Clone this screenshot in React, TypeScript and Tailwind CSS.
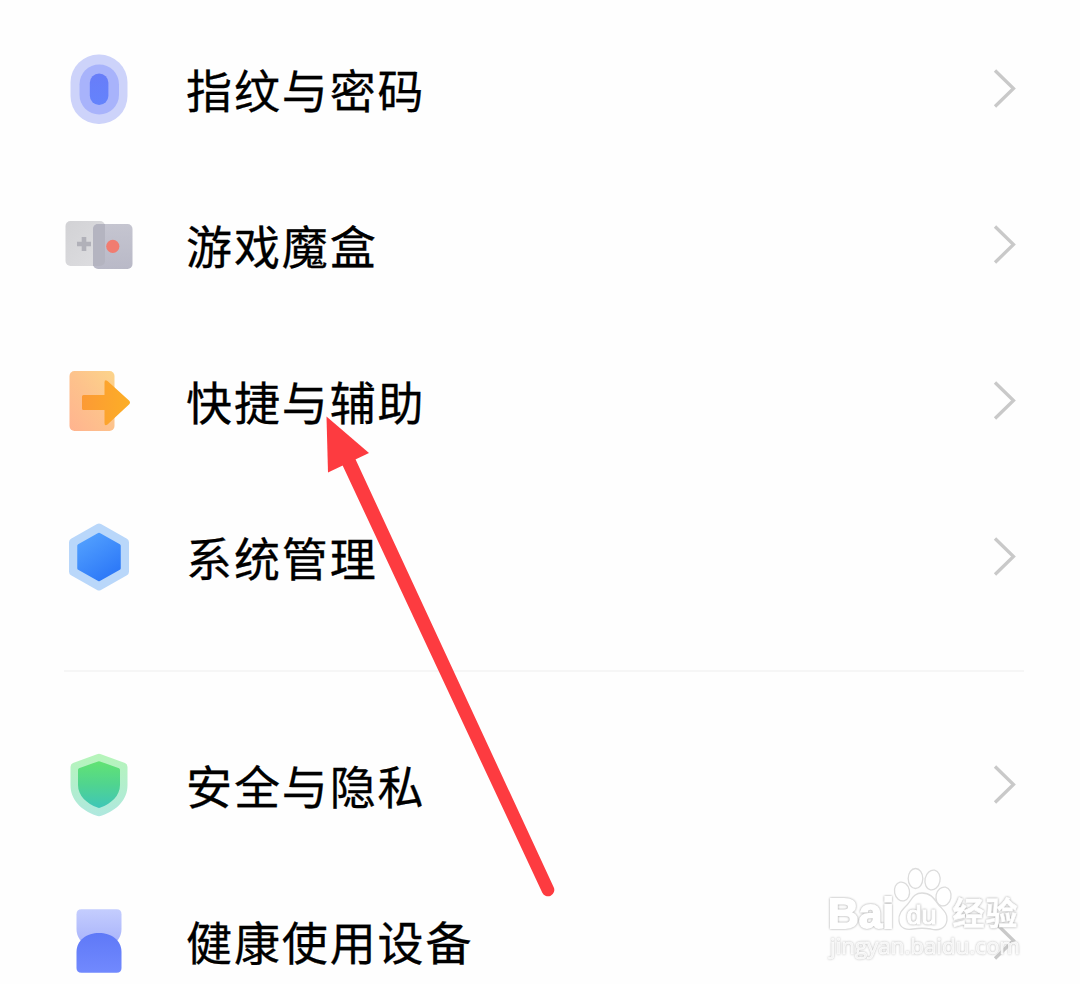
import { ReactNode } from "react";

interface ICON {
  children: ReactNode;
}
const Icon: React.FC<ICON> = ({ children }) => {
  return (
    <svg width="72" height="72" viewBox="0 0 72 72" className="shrink-0">
      {children}
    </svg>
  );
};

const FingerprintIcon = () => (
  <Icon>
    <defs>
      <linearGradient id="finger" x1="0" y1="0" x2="0" y2="1">
        <stop offset="0" stopColor="#687df8" />
        <stop offset="1" stopColor="#6483fc" />
      </linearGradient>
    </defs>
    <rect x="7.5" y="1.5" width="57" height="69.5" rx="28" fill="#cdd3fa" />
    <rect x="16.5" y="11.5" width="39.5" height="50" rx="19.7" fill="#a8b3fb" />
    <rect x="26.8" y="20.5" width="18.6" height="31.5" rx="9.3" fill="url(#finger)" />
  </Icon>
);

const GameIcon = () => (
  <Icon>
    <defs>
      <linearGradient id="padLeft" x1="0" y1="0" x2="1" y2="1">
        <stop offset="0" stopColor="#d2d2d5" />
        <stop offset="1" stopColor="#dedee1" />
      </linearGradient>
      <linearGradient id="padRight" x1="0" y1="0" x2="0" y2="1">
        <stop offset="0" stopColor="#c5c5d0" />
        <stop offset="1" stopColor="#b9b9c7" />
      </linearGradient>
    </defs>
    <rect x="2.5" y="12" width="39.5" height="45" rx="5" fill="url(#padLeft)" />
    <rect x="30" y="15" width="39.5" height="45" rx="5" fill="url(#padRight)" />
    <path d="M30 20a5 5 0 0 1 5-5h7v37a5 5 0 0 1-5 5h-7z" fill="#b4b4c0" />
    <path d="M21 28v14M14 35h14" stroke="#b1b1b9" strokeWidth="4.6" />
    <circle cx="49.8" cy="37.3" r="6.6" fill="#f17c70" />
  </Icon>
);

const ShortcutIcon = () => (
  <Icon>
    <defs>
      <linearGradient id="door" x1="0" y1="1" x2="1" y2="0">
        <stop offset="0" stopColor="#ffb38f" />
        <stop offset="0.5" stopColor="#fdc28c" />
        <stop offset="1" stopColor="#fcd48a" />
      </linearGradient>
      <linearGradient id="arrow" x1="0" y1="0" x2="1" y2="0">
        <stop offset="0" stopColor="#fc9a35" />
        <stop offset="1" stopColor="#fcae26" />
      </linearGradient>
    </defs>
    <rect x="6.5" y="6" width="45" height="60" rx="5" fill="url(#door)" />
    <path
      d="M19 31.500q0-1.500 1.500-1.500H41.500V17.500q0-3.500 3-1.500L66 35.500q2 2 0 4L44.500 59.500q-3 2-3-1.500V45H20.500q-1.500 0-1.500-1.500z"
      fill="url(#arrow)"
    />
  </Icon>
);

const SystemIcon = () => (
  <Icon>
    <defs>
      <linearGradient id="hex" x1="0" y1="0" x2="0.6" y2="1">
        <stop offset="0" stopColor="#55a3ff" />
        <stop offset="1" stopColor="#2e7af8" />
      </linearGradient>
    </defs>
    <path
      d="M36 6.500L62 21.300V50.700L36 65.500L10 50.700V21.300z"
      fill="#b9d7fa"
      stroke="#b9d7fa"
      strokeWidth="8"
      strokeLinejoin="round"
    />
    <path
      d="M36 13.500L56 24.700V47.300L36 58.500L16 47.300V24.700z"
      fill="url(#hex)"
      stroke="url(#hex)"
      strokeWidth="3.500"
      strokeLinejoin="round"
    />
  </Icon>
);

const ShieldIcon = () => (
  <Icon>
    <defs>
      <linearGradient id="shieldOuter" x1="0" y1="0" x2="0" y2="1">
        <stop offset="0" stopColor="#b6f5b9" />
        <stop offset="1" stopColor="#afe8df" />
      </linearGradient>
      <linearGradient id="shieldInner" x1="0" y1="0" x2="0" y2="1">
        <stop offset="0" stopColor="#62e373" />
        <stop offset="0.5" stopColor="#50d48f" />
        <stop offset="1" stopColor="#3fc6b8" />
      </linearGradient>
    </defs>
    <path
      d="M34 5.200Q36 4.300 38 5.200L62 14Q64.500 15 64.500 18V36C64.500 51 54 61 39 66.500Q36 67.800 33 66.500C18 61 7.500 51 7.500 36V18Q7.500 15 10 14z"
      fill="url(#shieldOuter)"
    />
    <path
      d="M35 12.400Q36 12 37 12.400L56 19.300Q57 19.700 57 21V36C57 47 48 54.500 37.500 58.600Q36 59.200 34.500 58.600C24 54.500 15 47 15 36V21Q15 19.700 16 19.300z"
      fill="url(#shieldInner)"
    />
  </Icon>
);

const DeviceIcon = () => (
  <Icon>
    <defs>
      <linearGradient id="deviceTop" x1="0" y1="0" x2="0" y2="1">
        <stop offset="0" stopColor="#c4cdfe" />
        <stop offset="1" stopColor="#a5b0fa" />
      </linearGradient>
      <linearGradient id="deviceBottom" x1="0" y1="0" x2="0" y2="1">
        <stop offset="0" stopColor="#5f79f7" />
        <stop offset="1" stopColor="#7189fe" />
      </linearGradient>
    </defs>
    <path
      d="M18.500 4.200H53.500Q58.500 4.200 58.500 9.200V24C58.500 36 48 43.500 36 43.500S13.500 36 13.500 24V9.200Q13.500 4.200 18.500 4.200z"
      fill="url(#deviceTop)"
    />
    <path
      d="M13.500 47C13.500 35 24 28 36 28S58.500 35 58.500 47V63Q58.500 67.700 53.500 67.700H18.500Q13.500 67.700 13.500 63z"
      fill="url(#deviceBottom)"
    />
  </Icon>
);

interface ROW {
  title: string;
  icon: ReactNode;
}
const Row: React.FC<ROW> = ({ title, icon }) => {
  return (
    <li className="flex h-[156px] items-center px-[63px]">
      {icon}
      <span className="ml-[51px] flex-1 pb-0.5 text-[46px] leading-none tracking-[1.9px] whitespace-nowrap text-black [-webkit-text-stroke:0.3px_black]">
        {title}
      </span>
      <svg width="24" height="42" viewBox="0 0 24 42" className="shrink-0">
        <path d="M2 2.500L20.500 20.500L2 38.500" fill="none" stroke="#c9c9c9" strokeWidth="3.300" />
      </svg>
    </li>
  );
};

const Watermark = () => (
  <svg
    width="230"
    height="125"
    viewBox="0 0 230 125"
    className="absolute top-[855px] left-[810px]"
    fill="#fff"
    stroke="#fff"
  >
    <g stroke="#dcdcdc" strokeWidth="1.300">
      <ellipse cx="92" cy="36.500" rx="7.500" ry="9.500" transform="rotate(-12 92 36.500)" />
      <ellipse cx="105.500" cy="23.500" rx="7.300" ry="10" />
      <ellipse cx="122.500" cy="25" rx="7.500" ry="10" transform="rotate(12 122.500 25)" />
      <ellipse cx="133.500" cy="41.500" rx="7.500" ry="9.500" transform="rotate(12 133.500 41.500)" />
      <path d="M112 38C104 38 102 44 97 50C92 55 88 59 89 66C90 74 97 75 103 74C109 73 115 73 121 74C128 76 136 74 137 65C138 58 132 54 128 49C123 42 120 38 112 38z" />
    </g>
    <g className="[filter:drop-shadow(0_0_0.8px_#a0a0a0)]">
      <text
        x="18"
        y="72.500"
        fontFamily="Liberation Sans, sans-serif"
        fontWeight="bold"
        fontSize="42"
        textLength="66"
        lengthAdjust="spacingAndGlyphs"
        strokeWidth="1.800"
      >
        Bai
      </text>
      <text
        x="96.500"
        y="69"
        fontFamily="Liberation Sans, sans-serif"
        fontSize="26"
        textLength="30"
        lengthAdjust="spacingAndGlyphs"
        strokeWidth="1.200"
      >
        du
      </text>
      <text
        x="142.500"
        y="70"
        fontFamily="Noto Sans CJK SC, sans-serif"
        fontSize="32"
        fontWeight="bold"
        textLength="65"
        strokeWidth="0.600"
      >
        经验
      </text>
    </g>
    <text
      x="20"
      y="98.500"
      fontFamily="Open Sans, Noto Sans, sans-serif"
      fontSize="22"
      textLength="190"
      lengthAdjust="spacingAndGlyphs"
      strokeWidth="0.600"
      fillOpacity="0.75"
      className="[filter:drop-shadow(0_0_0.8px_#b0b0b0)]"
    >
      jingyan.baidu.com
    </text>
  </svg>
);

const App = () => {
  return (
    <div className="relative h-[984px] w-[1080px] overflow-hidden bg-[#fefefe] font-['Noto_Sans_CJK_SC',sans-serif]">
      <ul className="pt-[11px]">
        <Row title="指纹与密码" icon={<FingerprintIcon />} />
        <Row title="游戏魔盒" icon={<GameIcon />} />
        <Row title="快捷与辅助" icon={<ShortcutIcon />} />
        <Row title="系统管理" icon={<SystemIcon />} />
      </ul>
      <hr className="mt-[35px] mr-14 mb-[35px] ml-16 border-t-2 border-[#f6f6f6]" />
      <ul>
        <Row title="安全与隐私" icon={<ShieldIcon />} />
        <Row title="健康使用设备" icon={<DeviceIcon />} />
      </ul>
      <Watermark />
      <svg
        width="240"
        height="490"
        viewBox="0 0 240 490"
        className="absolute top-[412px] left-[322px]"
        fill="#fd3b40"
      >
        <path d="M19 50L32 44L231.700 475.300A6.300 6.300 0 0 1 220.300 480.700z" />
        <path d="M4.500 4.500L47 41L6 60.500z" />
      </svg>
    </div>
  );
};
export default App;
